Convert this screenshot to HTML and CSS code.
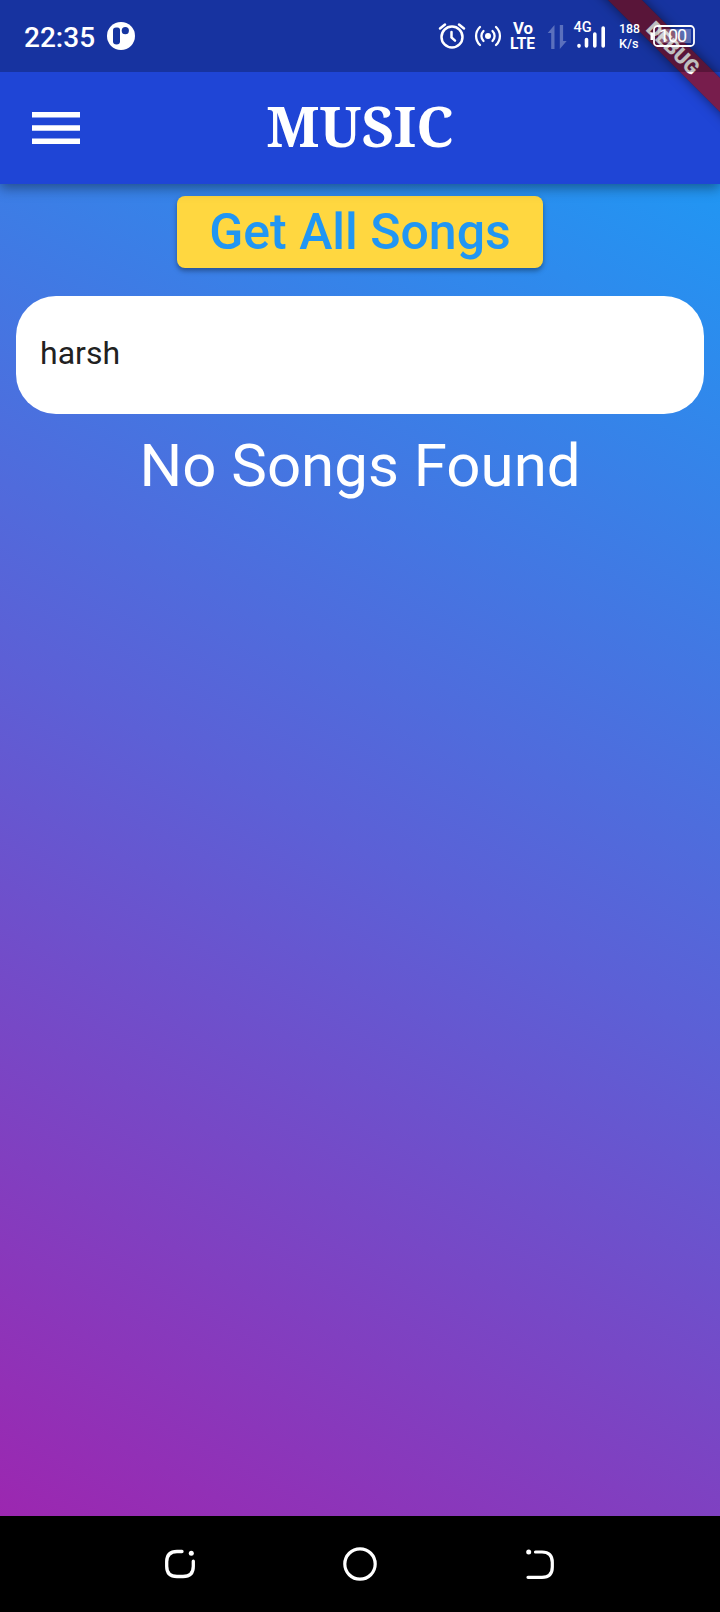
FILE: index.html
```html
<!DOCTYPE html>
<html lang="en">
<head>
<meta charset="utf-8">
<title>Music</title>
<link rel="stylesheet" href="styles.css">
</head>
<body>
<div class="screen">
  <header class="app-bar">
    <svg class="menu" viewBox="0 0 48 32" width="48" height="32" fill="#fff"><path d="M0 0h48v5.500H0zM0 13.200h48v5.500H0zM0 26.500h48V32H0z"/></svg>
    <h1 class="title">MUSIC</h1>
  </header>
  <div class="debug-banner">DEBUG</div>
  <div class="status-bar">
    <span class="clock">22:35</span>
    <svg class="notif" viewBox="0 0 28 28" width="28" height="28"><circle cx="14" cy="14" r="14" fill="#fff"/><path d="M6 8.200Q6 5.500 9 5.500h1.500Q13 5.500 13 8V19.500Q13 22.500 9.500 22.500Q6 22.500 6 19.500z" fill="#1534a0"/><circle cx="18.300" cy="8.700" r="3.600" fill="#1534a0"/></svg>
    <svg class="status-icons" viewBox="430 0 290 72" width="290" height="72" fill="none" stroke="#fff" stroke-linecap="round">
      <g stroke-width="2.500"><circle cx="452" cy="37" r="10.500"/><path d="M451.500 32v5.500l3.500 3.200M440 28.500l5-4M464 28.500l-5-4"/></g>
      <circle cx="488" cy="36" r="3" fill="#fff" stroke="none"/>
      <g stroke-width="2.300"><path d="M483.500 31a7 7 0 0 0 0 10M492.500 31a7 7 0 0 1 0 10M480 27a12.300 12.300 0 0 0 0 18M496 27a12.300 12.300 0 0 1 0 18"/></g>
      <g class="volte"><text x="513" y="34" textLength="20" lengthAdjust="spacingAndGlyphs">Vo</text><text x="510" y="49" textLength="25" lengthAdjust="spacingAndGlyphs">LTE</text></g>
      <g fill="#5b70bd" stroke="none"><path d="M554.500 25v24h-3.300V33h-3.500zM559.800 25h3.300v16h3.600l-6.900 8z"/></g>
      <text class="network" x="573.500" y="31.500">4G</text>
      <g stroke-width="3.600"><path d="M579 45.500v.6M586.500 39.500v6.500M594.800 34v12M603.200 28v18"/></g>
      <g class="speed"><text x="619" y="33" textLength="21" lengthAdjust="spacingAndGlyphs">188</text><text x="619" y="48" textLength="19.500" lengthAdjust="spacingAndGlyphs">K/s</text></g>
      <path d="M658 29h33v14h-33z" fill="#fff" fill-opacity=".3" stroke="none"/>
      <rect x="654" y="26" width="40" height="20" rx="3.500" stroke-width="1.800"/>
      <path d="M651.800 32.500v7.500" stroke-width="2.600" stroke-linecap="butt"/>
      <text class="battery" x="659" y="42" textLength="28">100</text>
    </svg>
  </div>
  <main class="content">
    <button class="get-all">Get All Songs</button>
    <div class="search">harsh</div>
    <p class="empty">No Songs Found</p>
  </main>
  <nav class="nav-bar">
    <svg viewBox="160 1540 40 48" width="40" height="48" fill="none" stroke="#fff" stroke-width="3.300" stroke-linecap="round"><path d="M182 1551.500h-5q-10.300 0-10.300 10.300v4.400q0 10.300 10.300 10.300h6q10.300 0 10.300-10.300v-5"/><circle cx="191.300" cy="1553.300" r="2.500" fill="#fff" stroke="none"/></svg>
    <svg viewBox="340 1540 40 48" width="40" height="48" fill="none" stroke="#fff" stroke-width="3.200"><circle cx="360" cy="1564" r="15.200"/></svg>
    <svg viewBox="520 1540 40 48" width="40" height="48" fill="none" stroke="#fff" stroke-width="3.200" stroke-linecap="round"><path d="M535.500 1552h6.500q10.300 0 10.300 10.300v4.700q0 10.300-10.300 10.300h-14"/><circle cx="528.700" cy="1552" r="2.500" fill="#fff" stroke="none"/></svg>
  </nav>
</div>
</body>
</html>
```
FILE: styles.css
```css
* { box-sizing: border-box; }
body { margin: 0; font-family: Roboto, sans-serif; }
.screen {
  position: relative;
  display: flex;
  flex-direction: column;
  width: 720px;
  height: 1612px;
  overflow: hidden;
}
.app-bar {
  position: relative;
  z-index: 1;
  display: grid;
  grid-template-columns: 80px 1fr 80px;
  align-items: center;
  height: 184px;
  padding-top: 72px;
  background: #1f45d6;
  box-shadow: 0 4px 12px rgba(0, 0, 0, .4);
}
.menu { margin-left: 32px; }
.title {
  margin: 0;
  padding-bottom: 6px;
  color: #fff;
  font: 700 56px/1 "Noto Serif", "DejaVu Serif Condensed", "DejaVu Serif", serif;
  text-align: center;
}
.debug-banner {
  position: absolute;
  z-index: 2;
  left: 552.500px;
  top: 35.500px;
  width: 240px;
  height: 24px;
  transform: rotate(45deg);
  background: rgba(160, 10, 10, .68);
  box-shadow: 0 0 12px rgba(0, 0, 0, .5);
  color: #fff;
  font-size: 20.400px;
  font-weight: 900;
  line-height: 24px;
  text-align: center;
}
.status-bar {
  position: absolute;
  z-index: 3;
  inset: 0 0 auto;
  display: flex;
  align-items: center;
  height: 72px;
  padding-left: 24px;
  background: rgba(0, 0, 0, .25);
}
.clock { color: #fff; font-size: 28px; font-weight: 500; line-height: 72px; padding-top: 3px; }
.notif { margin-left: 12px; }
.status-icons { margin-left: auto; }
.status-icons text { stroke: none; fill: #fff; }
.volte { font: 700 16px Roboto, sans-serif; }
.network { font: 500 14.500px Roboto, sans-serif; }
.speed { font: 500 13.500px Roboto, sans-serif; }
.battery { font: 400 18px Roboto, sans-serif; }
.content {
  flex: 1;
  display: flex;
  flex-direction: column;
  align-items: center;
  padding: 12px 16px;
  background: linear-gradient(208.400deg, #2196f3, #5c60d6 50%, #9c27b0);
}
.get-all {
  width: 366px;
  height: 72px;
  padding: 0;
  border: 0;
  border-radius: 8px;
  background: #ffd740;
  box-shadow: 0 3px 5px rgba(0, 0, 0, .35);
  color: #2196f3;
  font: 500 50px/72px Roboto, sans-serif;
}
.search {
  width: 100%;
  height: 118px;
  margin-top: 28px;
  padding-left: 24px;
  border-radius: 40px;
  background: #fff;
  color: #212121;
  font-size: 32px;
  line-height: 114px;
}
.empty { margin: 17px 0 0; color: #fff; font-size: 60px; line-height: 70px; }
.nav-bar {
  display: flex;
  justify-content: center;
  align-items: center;
  gap: 140px;
  height: 96px;
  background: #000;
}
```
